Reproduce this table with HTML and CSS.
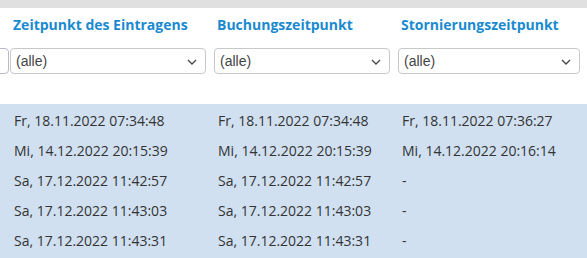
FILE: index.html
```html
<!DOCTYPE html>
<html lang="de">
<head>
<meta charset="utf-8">
<link rel="stylesheet" href="styles.css">
</head>
<body>
<div class="topbar"></div>
<div class="head">
  <div class="hrow">
    <div class="cell"></div>
    <div class="cell th">Zeitpunkt des Eintragens</div>
    <div class="cell th">Buchungszeitpunkt</div>
    <div class="cell th">Stornierungszeitpunkt</div>
  </div>
  <div class="frow">
    <div class="cell c0"><div class="sel partial"></div></div>
    <div class="cell"><div class="sel w1"><span>(alle)</span><svg class="chev" width="10" height="6" viewBox="0 0 10 6"><path d="M1 1l4 4 4-4" fill="none" stroke="#444" stroke-width="1.3"/></svg></div></div>
    <div class="cell"><div class="sel w2"><span>(alle)</span><svg class="chev" width="10" height="6" viewBox="0 0 10 6"><path d="M1 1l4 4 4-4" fill="none" stroke="#444" stroke-width="1.3"/></svg></div></div>
    <div class="cell"><div class="sel w3"><span>(alle)</span><svg class="chev" width="10" height="6" viewBox="0 0 10 6"><path d="M1 1l4 4 4-4" fill="none" stroke="#444" stroke-width="1.3"/></svg></div></div>
  </div>
</div>
<div class="body">
  <div class="row"><div class="cell"></div><div class="cell td">Fr, 18.11.2022 07:34:48</div><div class="cell td">Fr, 18.11.2022 07:34:48</div><div class="cell td">Fr, 18.11.2022 07:36:27</div></div>
  <div class="row"><div class="cell"></div><div class="cell td">Mi, 14.12.2022 20:15:39</div><div class="cell td">Mi, 14.12.2022 20:15:39</div><div class="cell td">Mi, 14.12.2022 20:16:14</div></div>
  <div class="row"><div class="cell"></div><div class="cell td">Sa, 17.12.2022 11:42:57</div><div class="cell td">Sa, 17.12.2022 11:42:57</div><div class="cell td">-</div></div>
  <div class="row"><div class="cell"></div><div class="cell td">Sa, 17.12.2022 11:43:03</div><div class="cell td">Sa, 17.12.2022 11:43:03</div><div class="cell td">-</div></div>
  <div class="row"><div class="cell"></div><div class="cell td">Sa, 17.12.2022 11:43:31</div><div class="cell td">Sa, 17.12.2022 11:43:31</div><div class="cell td">-</div></div>
</div>
</body>
</html>
```
FILE: styles.css
```css
html, body { margin: 0; padding: 0; background: #fff; overflow: hidden; }
body { width: 587px; height: 258px; font-family: "Open Sans", sans-serif; }
.topbar { height: 8px; background: #e0e0e0; }
.head { height: 96px; background: #fff; }
.hrow, .frow, .row {
  display: grid;
  grid-template-columns: 9px 204px 184px 190px;
}
.cell { padding-left: 1px; min-width: 0; }
.hrow { height: 33px; align-items: center; }
.th {
  padding-left: 4px;
  font-weight: 700;
  font-size: 14px;
  color: #1a8ad0;
  white-space: nowrap;
}
.frow { margin-top: 7px; height: 26px; }
.c0 { padding-left: 0; overflow: hidden; display: flex; justify-content: flex-end; }
.sel {
  position: relative;
  box-sizing: border-box;
  height: 26px;
  border: 1px solid #c8c8c8;
  border-radius: 4px;
  background: #fff;
  font-family: "Liberation Sans", Arial, sans-serif;
  font-size: 14px;
  color: #444;
  display: flex;
  align-items: center;
  padding-left: 5px;
}
.partial { width: 40px; flex: none; border-color: #b8b8c8; }
.w1 { width: 196px; }
.w2 { width: 176px; }
.w3 { width: 182px; }
.chev { position: absolute; right: 8px; top: 10px; }
.body { background: #d0e0f0; height: 154px; padding-top: 1px; }
.row { height: 30px; align-items: center; }
.td {
  padding-left: 5px;
  font-size: 14px;
  color: #333;
  white-space: nowrap;
}
```
